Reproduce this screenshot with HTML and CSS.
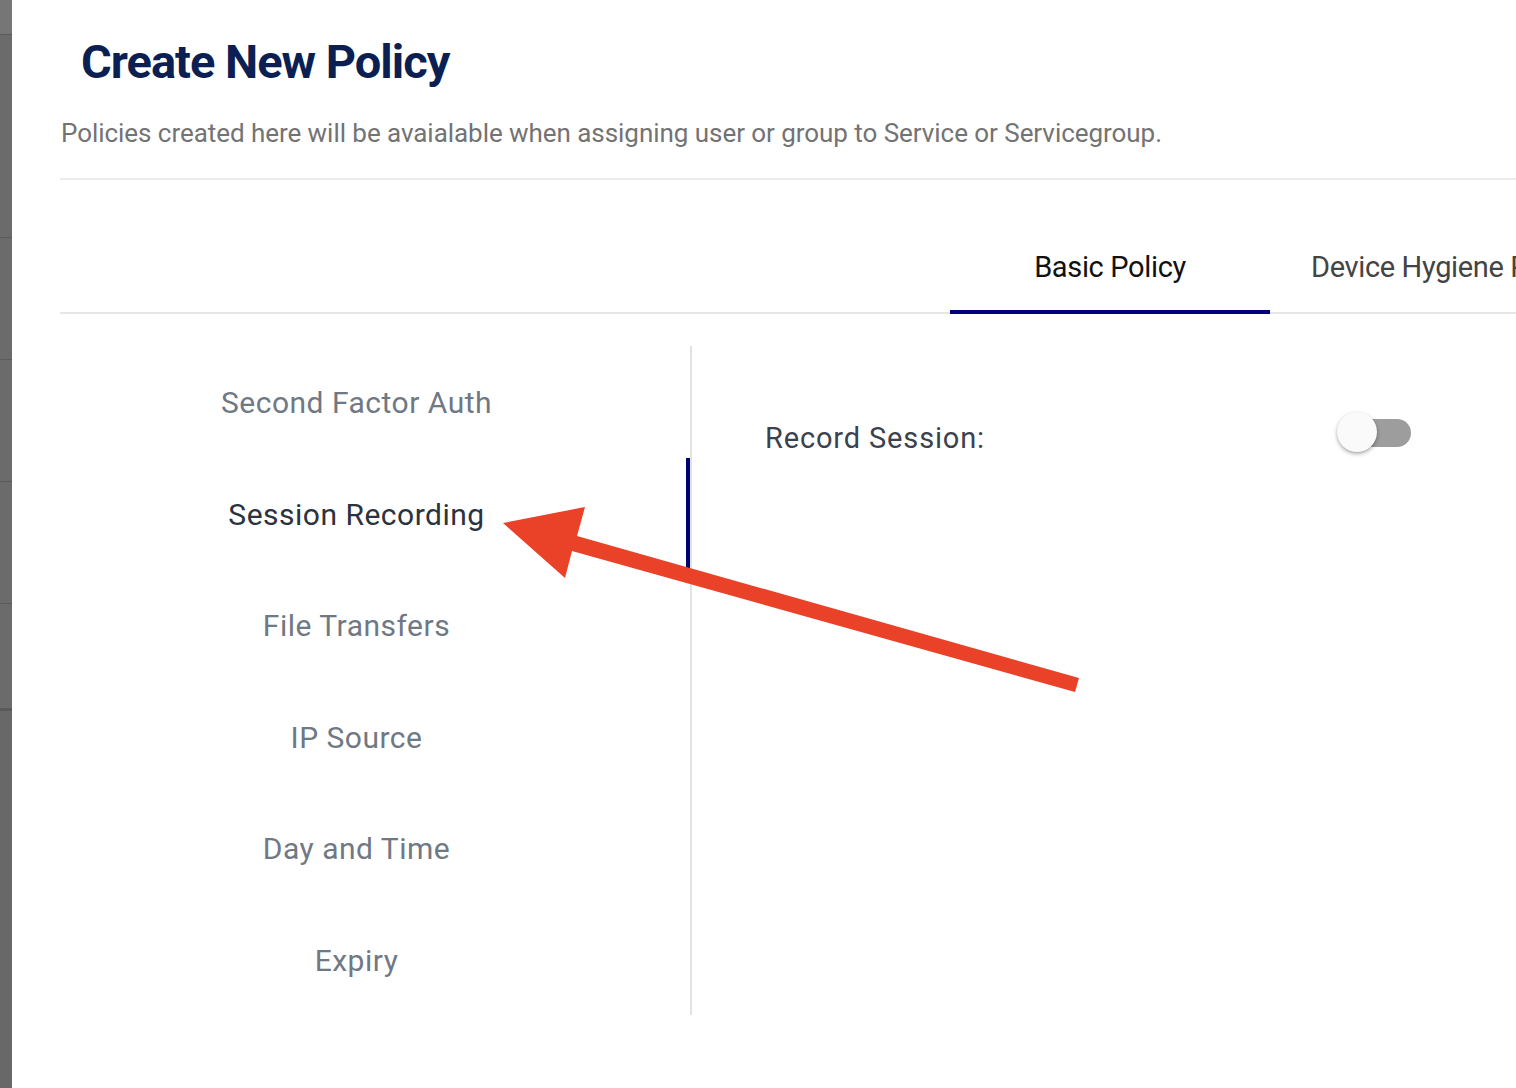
FILE: index.html
```html
<!DOCTYPE html>
<html lang="en">
<head>
<meta charset="utf-8">
<title>Create New Policy</title>
<link rel="stylesheet" href="styles.css">
</head>
<body>
<div class="page">
  <div class="backdrop">
    <div class="bd-row bd-top"></div>
    <div class="bd-row bd-r1"></div>
    <div class="bd-row bd-r2"></div>
    <div class="bd-row bd-r3"></div>
    <div class="bd-row bd-r4"></div>
    <div class="bd-row bd-r5"></div>
    <div class="bd-rest"></div>
  </div>
  <div class="modal">
    <h1 class="title">Create New Policy</h1>
    <p class="subtitle">Policies created here will be avaialable when assigning user or group to Service or Servicegroup.</p>
    <div class="rule"></div>
    <div class="tabs">
      <div class="tab tab-active">Basic Policy</div>
      <div class="tab tab-next">Device Hygiene Policy</div>
    </div>
    <div class="content">
      <ul class="nav">
        <li class="nav-item">Second Factor Auth</li>
        <li class="nav-item nav-active">Session Recording</li>
        <li class="nav-item">File Transfers</li>
        <li class="nav-item">IP Source</li>
        <li class="nav-item">Day and Time</li>
        <li class="nav-item">Expiry</li>
      </ul>
      <div class="panel">
        <div class="setting">
          <span class="setting-label">Record Session:</span>
          <span class="toggle"><span class="toggle-track"></span><span class="toggle-knob"></span></span>
        </div>
      </div>
    </div>
  </div>
  <svg class="arrow" width="1516" height="1088" viewBox="0 0 1516 1088" aria-hidden="true">
    <polygon points="503,523 585,507 577,536 1079,678 1075,692 572,551 565,578" fill="#ea4129"/>
  </svg>
</div>
</body>
</html>
```
FILE: styles.css
```css
* { box-sizing: border-box; }
html, body { margin: 0; padding: 0; }
body {
  width: 1516px;
  height: 1088px;
  overflow: hidden;
  background: #fff;
  font-family: Roboto, "Liberation Sans", sans-serif;
}
.page {
  position: relative;
  display: flex;
  width: 1516px;
  height: 1088px;
}
.backdrop {
  width: 12px;
  flex: none;
  display: flex;
  flex-direction: column;
  background: #6b6b6b;
}
.bd-row { border-bottom: 1px solid #5b5b5b; flex: none; }
.bd-top { height: 35px; background: #767676; }
.bd-r1 { height: 203px; }
.bd-r2 { height: 122px; }
.bd-r3 { height: 122px; }
.bd-r4 { height: 122px; }
.bd-r5 { height: 107px; border-bottom: 3px solid #595959; }
.bd-rest { flex: 1; background: #686868; }

.modal {
  flex: 1;
  min-width: 0;
  background: #fff;
  padding-left: 48px;
  overflow: hidden;
}
.title {
  margin: 0;
  padding: 34px 0 0 21px;
  font-size: 47px;
  line-height: 56px;
  font-weight: 700;
  letter-spacing: -1px;
  color: #0c1f52;
}
.subtitle {
  margin: 28px 0 0 1px;
  font-size: 26px;
  line-height: 30px;
  letter-spacing: -0.05px;
  color: #737373;
  white-space: nowrap;
}
.rule {
  margin-top: 30px;
  height: 2px;
  background: #ececec;
}
.tabs {
  display: flex;
  padding-left: 890px;
  border-bottom: 2px solid #e6e6e6;
  white-space: nowrap;
}
.tab {
  flex: none;
  padding: 70px 0 26px;
  font-size: 29px;
  line-height: 34px;
  letter-spacing: -0.35px;
  border-bottom: 4px solid transparent;
  margin-bottom: -2px;
}
.tab-active {
  width: 320px;
  text-align: center;
  color: #111;
  border-bottom-color: #00007f;
}
.tab-next {
  padding-left: 41px;
  color: #444;
}
.content {
  display: flex;
  padding-top: 32px;
}
.nav {
  list-style: none;
  margin: 0;
  padding: 0;
  width: 632px;
  flex: none;
  border-right: 2px solid #e2e2e2;
}
.nav-item {
  height: 111.5px;
  padding-top: 3px;
  line-height: 108px;
  padding-right: 37px;
  text-align: center;
  font-size: 30px;
  letter-spacing: 0.5px;
  color: #707884;
}
.nav-active {
  color: #2b3340;
  box-shadow: inset -4px 0 0 #00006e;
}
.panel {
  flex: 1;
  padding: 65px 105px 0 73px;
}
.setting {
  display: flex;
  justify-content: space-between;
  align-items: flex-start;
}
.setting-label {
  margin-top: 7px;
  font-size: 29px;
  line-height: 40px;
  letter-spacing: 0.85px;
  color: #3b424d;
}
.toggle {
  position: relative;
  width: 74px;
  height: 40px;
  flex: none;
  margin-top: 1px;
}
.toggle-track {
  position: absolute;
  left: 6px;
  top: 7px;
  width: 68px;
  height: 28px;
  border-radius: 14px;
  background: #9d9d9d;
}
.toggle-knob {
  position: absolute;
  left: 0;
  top: 0;
  width: 40px;
  height: 40px;
  border-radius: 50%;
  background: #fafafa;
  box-shadow: 0 2px 4px rgba(0,0,0,0.28), 0 1px 2px rgba(0,0,0,0.12);
}
.arrow {
  position: absolute;
  left: 0;
  top: 0;
  pointer-events: none;
}
```
